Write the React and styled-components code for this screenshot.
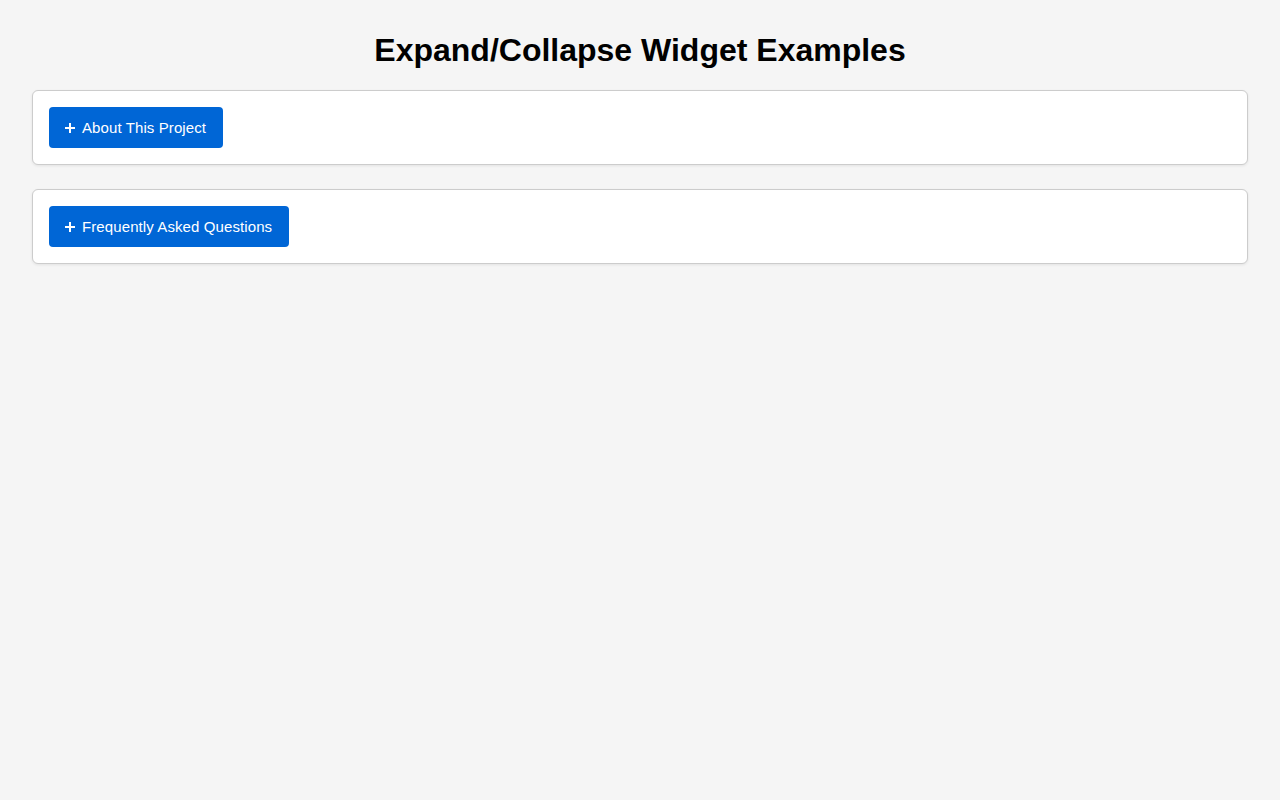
import React, { useState } from "react";
import styled, { createGlobalStyle } from "styled-components";

const GlobalStyle = createGlobalStyle`
  html, body {
    margin: 0;
    padding: 0;
    background: #f5f5f5;
    font-family: "Liberation Sans", Arial, Helvetica, sans-serif;
    color: #000;
  }
  * { box-sizing: border-box; }
`;

const Page = styled.div`
  padding: 32px 32px 32px;
  min-height: 800px;
`;

const Title = styled.h1`
  margin: 0 0 21px;
  font-size: 32px;
  line-height: 37px;
  font-weight: 700;
  text-align: center;
`;

const List = styled.div`
  display: flex;
  flex-direction: column;
  gap: 24px;
`;

const Card = styled.section`
  background: #fff;
  border: 1px solid #cccccc;
  border-radius: 6px;
  box-shadow: 0 1px 3px rgba(0, 0, 0, 0.08);
  padding: 16px;
`;

const ToggleButton = styled.button`
  display: inline-flex;
  align-items: center;
  gap: 7px;
  height: 41px;
  padding: 0 17px 0 16px;
  border: none;
  border-radius: 4px;
  background: #0066d6;
  color: #fff;
  font-family: "Liberation Sans", Arial, Helvetica, sans-serif;
  font-size: 15px;
  letter-spacing: 0.1px;
  cursor: pointer;
`;

const Content = styled.div`
  margin-top: 12px;
  font-size: 15px;
  line-height: 1.5;
  color: #333;
`;

const PlusIcon = ({ open }) => (
  <svg width="10" height="10" viewBox="0 0 10 10" aria-hidden="true">
    <rect x="0" y="4" width="10" height="2" fill="#fff" />
    {!open && <rect x="4" y="0" width="2" height="10" fill="#fff" />}
  </svg>
);

const Section = ({ title, children }) => {
  const [open, setOpen] = useState(false);
  return (
    <Card>
      <ToggleButton onClick={() => setOpen((o) => !o)} aria-expanded={open}>
        <PlusIcon open={open} />
        {title}
      </ToggleButton>
      {open && <Content>{children}</Content>}
    </Card>
  );
};

export default function App() {
  return (
    <>
      <GlobalStyle />
      <Page>
        <Title>Expand/Collapse Widget Examples</Title>
        <List>
          <Section title="About This Project">
            This project demonstrates accessible expand/collapse widgets.
          </Section>
          <Section title="Frequently Asked Questions">
            Answers to common questions appear here.
          </Section>
        </List>
      </Page>
    </>
  );
}
